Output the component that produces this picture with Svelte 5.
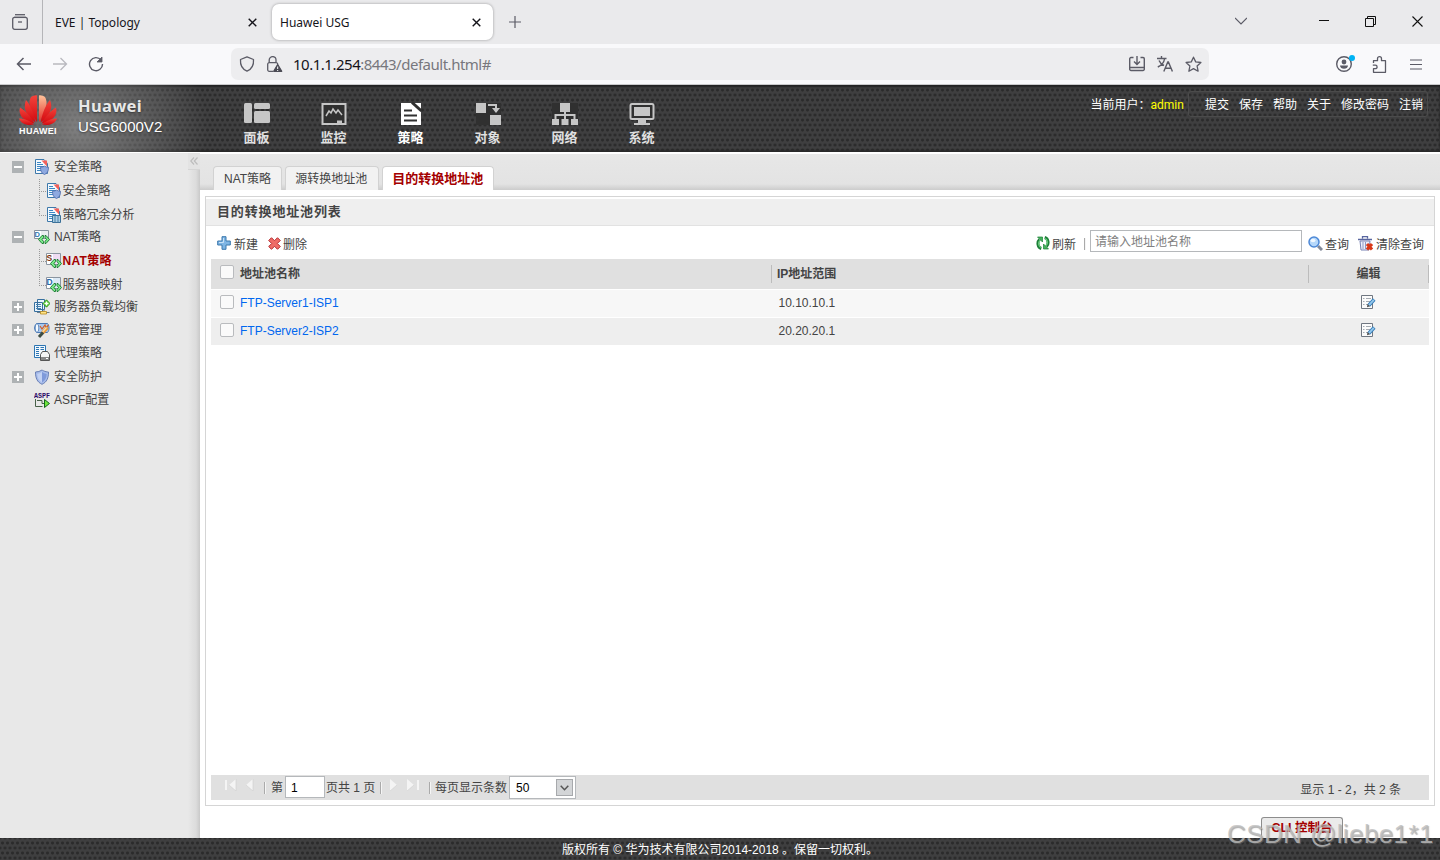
<script lang="ts">
  interface TreeNode {
    label: string;
    icon: string;
    children?: { label: string; icon: string; active?: boolean }[];
    state: 'open' | 'closed' | 'leaf';
  }

  const menu = [
    { label: '面板', icon: 'dashboard' },
    { label: '监控', icon: 'monitor' },
    { label: '策略', icon: 'policy' },
    { label: '对象', icon: 'object' },
    { label: '网络', icon: 'network' },
    { label: '系统', icon: 'system' }
  ];
  const userLinks = ['提交', '保存', '帮助', '关于', '修改密码', '注销'];

  const tree: TreeNode[] = [
    {
      label: '安全策略',
      icon: 'docShield',
      state: 'open',
      children: [
        { label: '安全策略', icon: 'docShield' },
        { label: '策略冗余分析', icon: 'docBin' }
      ]
    },
    {
      label: 'NAT策略',
      icon: 'nat',
      state: 'open',
      children: [
        { label: 'NAT策略', icon: 'natS', active: true },
        { label: '服务器映射', icon: 'natD' }
      ]
    },
    { label: '服务器负载均衡', icon: 'balance', state: 'closed' },
    { label: '带宽管理', icon: 'bandwidth', state: 'closed' },
    { label: '代理策略', icon: 'proxy', state: 'leaf' },
    { label: '安全防护', icon: 'shield', state: 'closed' },
    { label: 'ASPF配置', icon: 'aspf', state: 'leaf' }
  ];

  const tabs = ['NAT策略', '源转换地址池', '目的转换地址池'];
  const pools = [
    { name: 'FTP-Server1-ISP1', range: '10.10.10.1' },
    { name: 'FTP-Server2-ISP2', range: '20.20.20.1' }
  ];

  let activeMenu = $state('策略');
  let activeTab = $state('目的转换地址池');
</script>

{#snippet doc()}
  <path d="M1.500.5h8.500l3.500 4v10h-12z" fill="#f4f9fd" stroke="#3d78aa" />
  <path d="M3 3.500h4M3 5.500h6M3 7.500h7M3 9.500h4M3 11.500h4" stroke="#3c87c4" />
  <path d="M7.500 1.500h5.500v6z" fill="#f4605a" />
{/snippet}

{#snippet arrows()}
  <path d="M8 6.500 4.500 10.500 8 14.500h1.500v-2L8 10.500l1.500-2v-2z" fill="#7bea8b" stroke="#15772c" stroke-width=".9" />
  <path d="M12 6.500 15.500 10.500 12 14.500h-1v-2l1.500-2-1.500-2v-2z" fill="#7bea8b" stroke="#15772c" stroke-width=".9" />
{/snippet}

{#snippet natBase(letter: string, color: string)}
  <path d="M.5.5h14v11H.5z" fill={color} stroke="#8b95a0" />
  <path d="M1 1h6v10H1z" fill="#fff" />
  <text x=".6" y="8" font-size="8.500" font-weight="bold" fill={letter === 'S' ? '#7b3210' : '#2268a8'}>{letter}</text>
  {@render arrows()}
{/snippet}

{#snippet treeIcon(name: string)}
  <svg class="tree-icon" width="16" height="16" viewBox="0 0 16 16" fill="none">
    {#if name === 'docShield'}
      {@render doc()}
      <path d="M6.500 8.200q2 0 4-1 2 1 4 1c0 4-1 6-4 7.300-3-1.300-4-3.300-4-7.300z" fill="#8ea9e0" stroke="#4f68a8" stroke-width=".8" />
    {:else if name === 'docBin'}
      {@render doc()}
      <path d="M6.500 8.500h8v7h-8z" fill="#a9cde4" stroke="#3a6f96" />
      <path d="M9 8.500v7M12 8.500v7" stroke="#4a7fa4" stroke-width="1" />
    {:else if name === 'nat'}
      <path d="M.5 1.500h14v8H.5z" fill="#e9edf0" stroke="#89949e" />
      <path d="M1 2h6v7H1z" fill="#fff" />
      <text x=".6" y="8" font-size="7.500" font-weight="bold" fill="#3077b0">D</text>
      {@render arrows()}
    {:else if name === 'natS'}
      {@render natBase('S', '#efdcf3')}
    {:else if name === 'natD'}
      {@render natBase('D', '#dce9f5')}
    {:else if name === 'balance'}
      <path d="M.5 3.500h8v9h-8zM3.500.5h7v10h-7z" fill="#eaf4fc" stroke="#376f9e" />
      <path d="M2 5.500h5M2 7.500h5M2 9.500h5" stroke="#437fae" />
      <path d="M12.500.8 16 4.500l-3.500 3.700L9 4.500z" fill="#58d52b" stroke="#20810f" stroke-width=".8" />
      <path d="M12.500 2.500v4M10.500 4.500h4" stroke="#fff" stroke-width="1.300" />
      <path d="M10 10v3M3 13.500h12.500" stroke="#6e7f8c" />
      <path d="M6.500 12.500h6v2.500h-6z" fill="#ffe487" stroke="#b98a20" stroke-width=".8" />
    {:else if name === 'bandwidth'}
      <path d="M2.500 1.500h11c2 2 2 7 0 9h-11c-2.500-2-2.500-7 0-9z" fill="#aac8ed" stroke="#4a79b5" />
      <ellipse cx="3" cy="6" rx="1.800" ry="4.300" fill="#f5fbff" stroke="#4a79b5" stroke-width=".8" />
      <path d="m6 4 2 3 3-4 1 3 2.500-3" stroke="#d35d24" stroke-width="1.200" />
      <path d="m13.500 5.500-5 5.500" stroke="#e89a3d" stroke-width="3.400" />
      <path d="m12.500 5.500-4 4.500" stroke="#ffdca0" stroke-width="1.200" />
      <path d="m9 10.500-4 4.500" stroke="#3d4d44" stroke-width="3" />
    {:else if name === 'proxy'}
      <path d="M.5.5h11v12H.5z" fill="#f1f8fe" stroke="#2c75b2" />
      <path d="M2 2.500h3M2 4.500h3M2 6.500h3M2 8.500h3M2 10.500h3M6.500 2.500H10M6.500 4.500H10" stroke="#2c75b2" />
      <path d="M6.500 15.500v-6l2-3h5l2 3v6z" fill="#f5f5f5" stroke="#555" />
      <path d="M7 12h8v3H7z" fill="#888" /><path d="M12 13.500h2" stroke="#fff" />
    {:else if name === 'shield'}
      <path d="M8 1Q5 3 1.500 3C1.500 9 3 13 8 15.300 13 13 14.500 9 14.500 3 11 3 8 1 8 1z" fill="#a8bdeb" stroke="#6a80b5" />
      <path d="M8 3v10.500C4.500 11.500 3.500 8.500 3.300 5 5.500 4.700 8 3 8 3z" fill="#c3d2f3" />
      <path d="M8 3v10.500c3.500-2 4.500-5 4.700-8.500C10.500 4.700 8 3 8 3z" fill="#7f9ada" />
    {:else if name === 'aspf'}
      <text x="0" y="5.500" font-size="7" font-weight="bold" font-family="Liberation Mono, monospace" textLength="16" lengthAdjust="spacingAndGlyphs" fill="#2b0a66">ASPF</text>
      <path d="M1.500 7v7.500h7M3 8.500h5v3h3" stroke="#476049" />
      <path d="m10.500 7.500 5 4-5 4z" fill="#6ee73c" stroke="#14651d" />
    {/if}
  </svg>
{/snippet}

{#snippet closeIcon()}
  <svg width="9" height="9" viewBox="0 0 9 9" stroke="#15141a" stroke-width="1.400"><path d="m.7.7 7.600 7.600M8.300.7.7 8.300" /></svg>
{/snippet}

<div class="window">
  <div class="tabstrip">
    <div class="recent">
      <svg width="16" height="16" viewBox="0 0 16 16" fill="none" stroke="#5b5b66" stroke-width="1.300">
        <path d="M3 .7h10" /><path d="M2 3.400h12" />
        <rect x=".7" y="3.400" width="14.600" height="11.900" rx="2" /><path d="M6 8h4" />
      </svg>
    </div>
    <div class="browser-tab first"><span class="tab-text">EVE | Topology</span>{@render closeIcon()}</div>
    <div class="browser-tab current"><span class="tab-text">Huawei USG</span>{@render closeIcon()}</div>
    <svg class="plus" width="12" height="12" viewBox="0 0 12 12" stroke="#5b5b66" stroke-width="1.200"><path d="M6 0v12M0 6h12" /></svg>
    <div class="window-buttons">
      <svg width="12" height="12" viewBox="0 0 12 12" fill="none" stroke="#5b5b66" stroke-width="1.200"><path d="m0 3 6 6 6-6" /></svg>
      <svg width="10" height="10" viewBox="0 0 10 10" stroke="#111"><path d="M0 4.500h10" /></svg>
      <svg width="11" height="11" viewBox="0 0 11 11" fill="none" stroke="#111"><path d="M.5 2.500h8v8h-8zM2.500 2.500v-2h8v8h-2" /></svg>
      <svg width="11" height="11" viewBox="0 0 11 11" stroke="#111" stroke-width="1.100"><path d="m.5.5 10 10M10.500.5l-10 10" /></svg>
    </div>
  </div>

  <div class="navbar">
    <div class="history">
      <svg width="16" height="16" viewBox="0 0 16 16" fill="none" stroke="#5b5b66" stroke-width="1.500"><path d="M15 8H1.500M7.500 2l-6 6 6 6" /></svg>
      <svg width="16" height="16" viewBox="0 0 16 16" fill="none" stroke="#b9b9bf" stroke-width="1.300"><path d="M1 8h13.500M8.500 2l6 6-6 6" /></svg>
      <svg width="16" height="16" viewBox="0 0 16 16" fill="none" stroke="#5b5b66" stroke-width="1.400"><path d="M13 4A6.500 6.500 0 1 0 14.500 8" /><path d="M14 1v5H9z" fill="#5b5b66" stroke-width=".8" /></svg>
    </div>
    <div class="urlbar">
      <svg width="16" height="16" viewBox="0 0 16 16" fill="none" stroke="#5b5b66" stroke-width="1.300"><path d="M8 .8 14.500 3.500c.4 5-1.500 9.500-6.500 11.700C3 13 1.100 8.500 1.500 3.500z" stroke-linejoin="round" /></svg>
      <svg class="lock" width="17" height="16" viewBox="0 0 17 16" fill="none" stroke="#5b5b66" stroke-width="1.300"><path d="M7 15.300H3.200a1.500 1.500 0 0 1-1.500-1.500V8.200a1.500 1.500 0 0 1 1.500-1.500h7a1.500 1.500 0 0 1 1.500 1.500M3.200 6.500V4a3.400 3.400 0 0 1 6.800 0v2.500" /><path d="m11.700 8.500 4 6.800h-8z" fill="#4b4b55" stroke="#4b4b55" stroke-linejoin="round" /><path d="M11.700 10.500v2.500M11.700 14v1" stroke="#fff" stroke-width="1" /></svg>
      <span class="url"><b>10.1.1.254</b>:8443/default.html#</span>
      <div class="url-actions">
        <svg width="16" height="16" viewBox="0 0 16 16" fill="none" stroke="#5b5b66" stroke-width="1.400"><path d="M4.500 1.500H2a1.300 1.300 0 0 0-1.300 1.300v10.400A1.300 1.300 0 0 0 2 14.500h12a1.300 1.300 0 0 0 1.300-1.300V2.800A1.300 1.300 0 0 0 14 1.500h-2.500M1 11.500h14M8 0v7.500M5 5.500l3 3 3-3" /></svg>
        <svg width="16" height="16" viewBox="0 0 16 16" fill="none" stroke="#5b5b66" stroke-width="1.400"><path d="M0 2.500h9.500M4.500 0v2.500M7.500 3C7 6.500 4 9.500.8 11M2 4.500c1 2.500 3 4 5 5M6.800 15.500l4-9.500h.6l4 9.500M8.300 12.300h5.600" /></svg>
        <svg width="17" height="17" viewBox="0 0 17 17" fill="none" stroke="#5b5b66" stroke-width="1.300" stroke-linejoin="round"><path d="m8.500 1.200 2.200 4.700 5.200.6-3.800 3.500 1 5.200-4.600-2.600-4.600 2.600 1-5.200L1.100 6.500l5.200-.6z" /></svg>
      </div>
    </div>
    <div class="browser-tools">
      <svg width="19" height="18" viewBox="0 0 19 18" fill="none" stroke="#5b5b66" stroke-width="1.400"><circle cx="8" cy="9" r="7.300" /><circle cx="8" cy="7" r="2.400" fill="#5b5b66" stroke="none" /><path d="M4 10.500h8c0 2-1.800 3.300-4 3.300s-4-1.300-4-3.300z" fill="#5b5b66" stroke="none" /><circle cx="16" cy="3" r="3" fill="#00b3f4" stroke="none" /></svg>
      <svg width="15" height="17" viewBox="0 0 15 17" fill="none" stroke="#5b5b66" stroke-width="1.300" stroke-linejoin="round"><path d="M1.500 7V4.700h4V2.700a2 2 0 0 1 4 0v2h4v11.600h-12v-3.600h1.800a1.800 1.800 0 0 0 0-3.600H.8" /></svg>
      <svg width="12" height="11" viewBox="0 0 12 11" stroke="#5b5b66" stroke-width="1.200"><path d="M0 1h12M0 5.500h12M0 10h12" /></svg>
    </div>
  </div>

  <header class="banner">
    <div class="brand">
      <div class="logo">
        <svg width="40" height="30" viewBox="0 0 40 30">
          <defs>
            <linearGradient id="petal" x1="0" y1="0" x2="0" y2="1">
              <stop offset="0" stop-color="#f2443c" /><stop offset="1" stop-color="#d3090f" />
            </linearGradient>
            <linearGradient id="petalLight" x1="0" y1="0" x2="0" y2="1">
              <stop offset="0" stop-color="#ffc29a" /><stop offset="1" stop-color="#e0302a" />
            </linearGradient>
          </defs>
          <path d="M19 27C11 16 10 7 13 2c2-1 4-2 6-1.500z" fill="url(#petal)" />
          <path d="M21 27C29 16 30 7 27 2c-2-1-4-2-6-1.500z" fill="url(#petalLight)" />
          <path d="M17.500 27.500C7 20 5 12 8 5c4 4 8 14 9.500 22.500z" fill="url(#petal)" />
          <path d="M22.500 27.500C33 20 35 12 32 5c-4 4-8 14-9.500 22.500z" fill="url(#petal)" />
          <path d="M16.500 28.500C5 26 0 20 2 12.500c5 3 11 9 14.500 16z" fill="url(#petal)" />
          <path d="M23.500 28.500C35 26 40 20 38 12.500c-5 3-11 9-14.500 16z" fill="url(#petal)" />
          <path d="M16 29.500C9 31 3 29 1 23.500c6 0 11 2.500 15 6z" fill="url(#petal)" />
          <path d="M24 29.500C31 31 37 29 39 23.500c-6 0-11 2.500-15 6z" fill="url(#petal)" />
        </svg>
        <span>HUAWEI</span>
      </div>
      <div class="product"><strong>Huawei</strong><span>USG6000V2</span></div>
    </div>

    <nav class="main-menu">
      {#each menu as item}
        <button class:active={activeMenu === item.label} onclick={() => (activeMenu = item.label)}>
          <svg width="28" height="24" viewBox="0 0 28 24" fill="none" stroke="currentColor">
            {#if item.icon === 'dashboard'}
              <g fill="currentColor" stroke="none"><rect x="1" y="1" width="8" height="20" rx="1.500" /><rect x="11" y="1" width="16" height="6" rx="1.500" /><rect x="11" y="9" width="16" height="12" rx="1.500" /></g>
            {:else if item.icon === 'monitor'}
              <rect x="2.500" y="2" width="23" height="20" fill="#303030" stroke-width="2" />
              <path d="m6 14 3-5 2 2 2-4 3 4 2-3 4 5" stroke-width="1.500" /><path d="M17 20h5" stroke-width="3" />
            {:else if item.icon === 'policy'}
              <path d="M4 1h20v22H4z" fill="currentColor" stroke="none" />
              <path d="m15 .5 9.500 8.500" stroke="#303030" stroke-width="3" />
              <path d="M7 8.500h8M7 13.500h13M7 18.500h13" stroke="#303030" stroke-width="2" />
            {:else if item.icon === 'object'}
              <path d="M2 1h25v22H2z" fill="#303030" stroke="none" />
              <path d="M2 1h10v10H2zM16 13h11v10H16z" fill="currentColor" stroke="none" />
              <path d="M14 3h8v5" stroke-width="2" /><path d="M18 6h8l-4 5z" fill="currentColor" stroke="none" />
            {:else if item.icon === 'network'}
              <path d="M1 1h26v22H1z" fill="#303030" stroke="none" />
              <path d="M9 1h10v9H9zM1 17h7v6H1zM10.500 17h7v6h-7zM20 17h7v6h-7z" fill="currentColor" stroke="none" />
              <path d="M14 10v7M4.500 17v-4h19v4" stroke-width="2" />
            {:else}
              <rect x="2.500" y="2" width="23" height="15" rx="1.500" fill="#303030" stroke-width="2" /><path d="M6 5h16v9H6z" fill="currentColor" stroke="none" />
              <path d="M10 18h8v3h4v2H6v-2h4z" fill="currentColor" stroke="none" />
            {/if}
          </svg>
          <span>{item.label}</span>
        </button>
      {/each}
    </nav>

    <div class="session">
      <span>当前用户：</span><span class="user">admin</span>
      <div class="links">
        {#each userLinks as link}<span>{link}</span>{/each}
      </div>
    </div>
  </header>

  <div class="body">
    <aside class="sidebar">
      <div class="tree">
        {#each tree as node}
          <div class="node" class:leaf={node.state === 'leaf'}>
            <span class="toggle" class:closed={node.state === 'closed'} class:hidden={node.state === 'leaf'}></span>
            {@render treeIcon(node.icon)}
            <span>{node.label}</span>
          </div>
          {#if node.children}
            <div class="children">
              {#each node.children as child}
                <div class="child" class:active={child.active}>
                  {@render treeIcon(child.icon)}
                  <span>{child.label}</span>
                </div>
              {/each}
            </div>
          {/if}
        {/each}
      </div>
      <div class="collapse">
        <svg width="8" height="8" viewBox="0 0 8 8" fill="none" stroke="#bdbdbd" stroke-width="1.200"><path d="M4 .5.8 4 4 7.500M7.500.5 4.300 4l3.200 3.500" /></svg>
      </div>
    </aside>

    <main>
      <div class="page-tabs">
        {#each tabs as tab}
          <button class:active={activeTab === tab} onclick={() => (activeTab = tab)}>{tab}</button>
        {/each}
      </div>

      <section class="panel">
        <h2>目的转换地址池列表</h2>
        <div class="toolbar">
          <span class="tool add">
            <svg width="14" height="14" viewBox="0 0 14 14"><path d="M5 .7h4V5h4.300v4H9v4.300H5V9H.7V5H5z" fill="#7eb5e4" stroke="#3b78ad" /><path d="M6.500 2v4.500H2" stroke="#c8e1f6" fill="none" /></svg>新建
          </span>
          <span class="tool">
            <svg width="13" height="13" viewBox="0 0 13 13"><path d="m3.500.7 3 3 3-3 2.800 2.800-3 3 3 3-2.800 2.800-3-3-3 3L.7 9.500l3-3-3-3z" fill="#ee6b66" stroke="#b52d31" /></svg>删除
          </span>
          <span class="tool refresh">
            <svg width="14" height="14" viewBox="0 0 14 14" fill="none"><path d="M5.300 12.500C1.500 11.500 1 6 3.500 3.500" stroke="#1c7f38" stroke-width="3" /><path d="M8.700 1.500C12.500 2.500 13 8 10.500 10.500" stroke="#1c7f38" stroke-width="3" /><path d="M4.800 11.500C2.300 10 2 6.500 3.800 4.500M9.200 2.500c2.500 1.500 2.800 5 1 7" stroke="#6fd282" stroke-width="1.200" /><path d="M1.500 1h5v5z" fill="#43b35a" stroke="#1c7f38" stroke-width=".7" /><path d="M12.500 13h-5V8z" fill="#43b35a" stroke="#1c7f38" stroke-width=".7" /></svg>刷新
          </span>
          <i class="split"></i>
          <input type="text" placeholder="请输入地址池名称" />
          <span class="tool search">
            <svg width="15" height="15" viewBox="0 0 15 15" fill="none"><path d="m10 10 4 4" stroke="#828999" stroke-width="3" /><circle cx="6" cy="6" r="5" fill="#b5d8fb" stroke="#4d88d6" stroke-width="1.500" /><ellipse cx="5" cy="4.500" rx="2.500" ry="1.700" fill="#f1f8ff" /></svg>查询
          </span>
          <span class="tool clear">
            <svg width="16" height="15" viewBox="0 0 16 15" fill="none"><path d="M4.500 2.500v-2h5v2M0 3.500h14" stroke="#5966a0" stroke-width="1.300" /><path d="M2 5h10l-1 9H3z" fill="#eef0fb" stroke="#7681b4" /><path d="M5 6v7M7.500 6v7" stroke="#8d97c4" /><path d="m9 8 5 5.500M14 8l-5 5.500" stroke="#d93817" stroke-width="3.200" /></svg>清除查询
          </span>
        </div>

        <div class="grid">
          <div class="grid-head">
            <div class="name-cell"><i class="check"></i><span>地址池名称</span></div>
            <div class="range-cell">IP地址范围</div>
            <div class="edit-cell">编辑</div>
          </div>
          {#each pools as pool}
            <div class="grid-row">
              <div class="name-cell"><i class="check"></i><a href="#{pool.name}">{pool.name}</a></div>
              <div class="range-cell">{pool.range}</div>
              <div class="edit-cell">
                <svg width="16" height="15" viewBox="0 0 16 15" fill="none"><path d="M1.500.5h11v13h-11z" fill="#fbfbfb" stroke="#6f7680" /><path d="M3 3.500h1.500M6 3.500h5M3 6.500h1.500M6 6.500h4M3 9.500h1.500M6 9.500h2" stroke="#a5abb2" /><path d="m14.200 4.500-5.500 6" stroke="#347ab6" stroke-width="3.600" /><path d="m13.800 4.800-5 5.500" stroke="#93c8ed" stroke-width="1.800" /><path d="m7.500 9 2.500 2.300-3 .9z" fill="#4c4c4c" /></svg>
              </div>
            </div>
          {/each}
        </div>

        <div class="pager">
          <div class="arrows back">
            <svg width="12" height="12" viewBox="0 0 12 12" fill="#f4f4f4"><path d="M0 1h2v10H0zM11 0v12L4 6z" /><path d="M11 0v12L4 6" fill="none" stroke="#cfcfcf" stroke-width=".6" /></svg>
            <svg width="8" height="12" viewBox="0 0 8 12" fill="#f4f4f4"><path d="M7 0v12L0 6z" /><path d="M7 0v12L0 6" fill="none" stroke="#cfcfcf" stroke-width=".6" /></svg>
          </div>
          <i class="split"></i>
          <span class="page-label">第</span>
          <span class="page-no">1</span>
          <span class="page-total">页共 1 页</span>
          <i class="split"></i>
          <div class="arrows next">
            <svg width="8" height="12" viewBox="0 0 8 12" fill="#f4f4f4"><path d="M0 0v12l7-6z" /><path d="M0 12l7-6" fill="none" stroke="#cfcfcf" stroke-width=".6" /></svg>
            <svg width="12" height="12" viewBox="0 0 12 12" fill="#f4f4f4"><path d="M10 1h2v10h-2zM0 0v12l7-6z" /><path d="M0 12l7-6" fill="none" stroke="#cfcfcf" stroke-width=".6" /></svg>
          </div>
          <i class="split"></i>
          <span class="size-label">每页显示条数</span>
          <span class="page-size">50
            <span class="drop"><svg width="9" height="6" viewBox="0 0 9 6" fill="none" stroke="#555" stroke-width="1.500"><path d="m.7.7 3.800 4L8.300.7" /></svg></span>
          </span>
          <span class="summary">显示 1 - 2，共 2 条</span>
        </div>
      </section>

      <button class="cli">CLI 控制台</button>
    </main>
  </div>

  <footer>版权所有 © 华为技术有限公司2014-2018 。保留一切权利。</footer>
  <div class="watermark">CSDN @liebe1*1</div>
</div>

<style>
  :global(body) {
    margin: 0;
    overflow: hidden;
  }

  .window {
    position: relative;
    display: flex;
    flex-direction: column;
    height: 860px;
    background: #fff;
    color: #444;
    font: 12px/16px 'Liberation Sans', 'Noto Sans CJK SC', sans-serif;
  }

  .window :global(svg) {
    display: block;
    flex: none;
  }

  button {
    padding: 0;
    border: 0;
    background: none;
    color: inherit;
    font: inherit;
  }

  /* Browser chrome */
  .tabstrip {
    display: flex;
    align-items: center;
    height: 44px;
    background: #eaeaec;
    color: #15141a;
    font: 12px/16px 'Noto Sans', 'Open Sans', sans-serif;
  }

  .recent {
    display: flex;
    align-items: center;
    width: 30px;
    height: 44px;
    padding-left: 12px;
    border-right: 1px solid #b5b5b8;
  }

  .browser-tab {
    display: flex;
    align-items: center;
    justify-content: space-between;
    box-sizing: border-box;
    height: 36px;
  }

  .tab-text {
    padding-top: 2px;
  }

  .browser-tab.first {
    width: 226px;
    padding: 0 12px;
  }

  .browser-tab.current {
    width: 221px;
    margin-left: 3px;
    padding: 0 12px 0 8px;
    border-radius: 7px;
    background: #fff;
    box-shadow: 0 0 3px rgba(0, 0, 0, 0.35);
  }

  .plus {
    margin-left: 16px;
  }

  .window-buttons {
    display: flex;
    align-items: center;
    margin-left: auto;
    padding: 0 17px 2px 0;
    gap: 36px;
  }

  .window-buttons svg:first-child {
    margin-right: 36px;
  }

  .navbar {
    display: flex;
    align-items: center;
    box-sizing: border-box;
    height: 41px;
    padding: 0 18px 0 16px;
    border-bottom: 1px solid #c9c9cb;
    background: #f9f9fb;
  }

  .history {
    display: flex;
    gap: 20px;
    width: 215px;
  }

  .urlbar {
    display: flex;
    align-items: center;
    box-sizing: border-box;
    width: 978px;
    height: 32px;
    padding: 0 7px 0 8px;
    border-radius: 7px;
    background: #ededef;
  }

  .lock {
    margin-left: 11px;
  }

  .url {
    margin: -1px 0 0 10px;
    color: #77777d;
    font: 15px/20px 'Noto Sans', 'Open Sans', sans-serif;
    letter-spacing: -0.49px;
  }

  .url b {
    color: #15141a;
    font-weight: 400;
  }

  .url-actions {
    display: flex;
    gap: 12px;
    margin-left: auto;
  }

  .browser-tools {
    display: flex;
    align-items: center;
    gap: 17px;
    margin-left: auto;
  }

  .browser-tools svg:nth-child(2) {
    margin-right: 6px;
  }

  /* Banner */
  .banner,
  footer {
    background-color: #3f3f40;
    background-image: radial-gradient(circle, #2b2b2b 1px, transparent 2px), radial-gradient(circle, #2b2b2b 1px, transparent 2px);
    background-position: 0 0, 2.5px 5px;
    background-size: 5px 10px;
  }

  .banner {
    position: relative;
    display: flex;
    height: 67px;
    box-shadow: inset 0 2px 2px #222, inset 0 -2px 2px #292929;
    color: #fff;
  }

  .brand {
    display: flex;
    width: 218px;
    background: radial-gradient(ellipse 130px 110px at 78px 42px, rgba(170, 170, 170, 0.6), transparent);
  }

  .logo {
    display: flex;
    flex-direction: column;
    align-items: center;
    width: 40px;
    margin: 10px 20px 0 18px;
  }

  .logo span {
    font: bold 9px/12px 'Liberation Sans', sans-serif;
    letter-spacing: 0.3px;
  }

  .product {
    display: flex;
    flex-direction: column;
    padding-top: 10px;
    text-shadow: 0 1px 2px #333;
  }

  .product strong {
    color: #e8e8e8;
    font: bold 16.500px/22px 'Noto Sans', sans-serif;
    letter-spacing: 0.3px;
  }

  .product span {
    font-size: 15px;
    line-height: 20px;
  }

  .main-menu {
    display: flex;
  }

  .main-menu button {
    display: flex;
    flex-direction: column;
    align-items: center;
    width: 77px;
    padding-top: 17px;
    color: #c6c6c6;
  }

  .main-menu span {
    margin-top: 2px;
    color: #e0e0e0;
    font: bold 13px/18px 'Noto Sans CJK SC', sans-serif;
  }

  .main-menu .active,
  .main-menu .active span {
    color: #fff;
  }

  .session {
    display: flex;
    align-items: center;
    height: 26px;
    margin: 6px 12px 0 auto;
    padding-top: 1px;
    white-space: nowrap;
  }

  .user {
    color: #ff0;
    font-family: Roboto, sans-serif;
  }

  .links {
    display: flex;
    box-sizing: border-box;
    gap: 10px;
    height: 26px;
    margin: -2px 0 0 4px;
    padding: 5px 4px 0 16px;
    border: 1px solid #4b4b4b;
    border-radius: 3px;
  }

  /* Sidebar */
  .body {
    display: flex;
    height: 686px;
  }

  .sidebar {
    display: flex;
    justify-content: space-between;
    box-sizing: border-box;
    width: 200px;
    padding-top: 2px;
    border-top: 1px solid #fff;
    background: linear-gradient(90deg, #e8e8e8 188px, #e0e0e0 193px, #dcdcdc 196px, #c9c9c9 200px);
  }

  .node {
    display: flex;
    align-items: center;
    height: 23px;
    padding-left: 12px;
  }

  .node.leaf {
    height: 24px;
  }

  .node .tree-icon {
    margin: 0 4px 0 10px;
  }

  .toggle {
    width: 12px;
    height: 12px;
    background: linear-gradient(#fff, #fff) center / 8px 2px no-repeat #aeb2b4;
  }

  .toggle.closed {
    background: linear-gradient(#fff, #fff) center / 8px 2px no-repeat, linear-gradient(#fff, #fff) center / 2px 8px no-repeat #aeb2b4;
  }

  .toggle.hidden {
    visibility: hidden;
  }

  .children {
    margin: 1px 0 -2px 39px;
    background: repeating-linear-gradient(#999 0 1px, transparent 1px 2px) 0 0 / 1px 38px no-repeat;
  }

  .child {
    display: flex;
    align-items: center;
    height: 24px;
    padding-left: 7px;
    background: repeating-linear-gradient(90deg, #999 0 1px, transparent 1px 2px) 0 12px / 7px 1px no-repeat;
  }

  .child span {
    padding-left: 0.5px;
  }

  .child.active {
    color: #a40000;
    font-weight: bold;
    letter-spacing: 0.3px;
  }

  .collapse {
    display: flex;
    align-items: center;
    justify-content: center;
    width: 12px;
    height: 16px;
    margin-top: -2px;
    border-bottom: 1px solid #d5d5d5;
    background: #e3e3e3;
  }

  /* Content */
  main {
    display: flex;
    flex: 1;
    flex-direction: column;
  }

  .page-tabs {
    display: flex;
    align-items: flex-end;
    box-sizing: border-box;
    gap: 3px;
    height: 38px;
    padding-left: 13px;
    border-top: 2px solid #fff;
    background: linear-gradient(#e7e7e7, #e3e3e3 30px, #ccc);
  }

  .page-tabs button {
    box-sizing: border-box;
    height: 24px;
    padding: 1px 10px 0 9px;
    border: 1px solid #d2d2d2;
    border-bottom: 0;
    border-radius: 4px 4px 0 0;
    background: #f2f2f2;
  }

  .page-tabs button:first-child {
    padding: 1px 10px 0;
  }

  .page-tabs button:nth-child(2) {
    padding-right: 11px;
  }

  .page-tabs .active {
    background: #fff;
    color: #a40000;
    font-size: 13px;
    font-weight: bold;
  }

  .panel {
    display: flex;
    flex-direction: column;
    box-sizing: border-box;
    height: 610px;
    margin: 6px 5px 0;
    padding: 2px 0 5px;
    border: 1px solid #d5d5d5;
  }

  h2 {
    box-sizing: border-box;
    height: 27px;
    margin: 0;
    padding: 5px 11px;
    border-bottom: 1px solid #e2e2e2;
    background: #efefef;
    font-size: 13px;
    line-height: 16px;
    letter-spacing: 0.85px;
  }

  .toolbar {
    display: flex;
    height: 33px;
    padding: 0 10px 0 11px;
  }

  .tool {
    display: flex;
    align-items: center;
    gap: 2px;
    margin-top: 5px;
    margin-right: 11px;
    height: 27px;
  }

  .tool svg {
    margin-bottom: 3px;
  }

  .tool.add {
    gap: 3px;
    margin-right: 10px;
  }

  .tool.refresh {
    margin-left: auto;
    margin-right: 8px;
  }

  .tool.search {
    margin-right: 9px;
  }

  .tool.clear {
    gap: 2px;
    margin-right: 0;
  }

  .split {
    width: 1px;
    height: 12px;
    background: #aaa;
    box-shadow: 1px 0 #f5f5f5;
  }

  .toolbar .split {
    margin-top: 12px;
  }

  .toolbar input {
    box-sizing: border-box;
    width: 212px;
    height: 22px;
    margin: 4px 6px 0 5px;
    padding: 1px 5px 0 4px;
    border: 1px solid #b5b8bb;
    border-radius: 0;
    font: inherit;
  }

  input::placeholder {
    color: #808080;
  }

  .grid {
    margin: 0 5px;
  }

  .grid-head,
  .grid-row {
    display: flex;
    align-items: center;
    height: 27px;
    margin-bottom: 1px;
    background: #f7f7f7;
  }

  .grid-row > div {
    margin-top: -2px;
  }

  .grid-row:last-child {
    background: #eee;
  }

  .grid-head {
    height: 30px;
    background: #e0e0e0;
    font-weight: bold;
  }

  .name-cell {
    display: flex;
    align-items: center;
    box-sizing: border-box;
    gap: 6px;
    width: 560px;
    padding-left: 9px;
  }

  .check {
    box-sizing: border-box;
    width: 14px;
    height: 14px;
    margin-bottom: 2px;
    border: 1px solid #b9bbbe;
    border-radius: 2px;
    background: #fafafa;
  }

  .grid-head .check {
    margin-bottom: 4px;
  }

  a {
    color: #0067ef;
    text-decoration: none;
  }

  .range-cell {
    box-sizing: border-box;
    width: 537px;
    padding-left: 7.5px;
  }

  .grid-head .range-cell {
    padding-left: 5px;
    border-left: 1px solid #bcbcbc;
  }

  .edit-cell {
    display: flex;
    justify-content: center;
    width: 119px;
  }

  .grid-head .edit-cell {
    border: solid #bcbcbc;
    border-width: 0 1px;
  }

  .grid-head .range-cell,
  .grid-head .edit-cell {
    line-height: 18px;
  }

  .pager {
    display: flex;
    align-items: center;
    height: 25px;
    margin: auto 5px 0;
    background: #e0e0e0;
  }

  .arrows {
    display: flex;
    gap: 10px;
    margin-bottom: 5px;
  }

  .back {
    margin: 0 10px 5px 14px;
    gap: 9px;
  }

  .next {
    margin-left: 9px;
    margin-right: 10px;
    gap: 9px;
  }

  .page-label {
    margin-left: 6px;
  }

  .page-no,
  .page-size {
    box-sizing: border-box;
    height: 22px;
    border: 1px solid #b5b8bb;
    background: #fff;
    color: #000;
  }

  .page-no {
    width: 40px;
    margin-left: 2px;
    margin-bottom: 1px;
    padding: 3px 5px;
  }

  .page-total {
    width: 54px;
    margin-left: 1px;
    white-space: nowrap;
  }

  .size-label {
    margin-left: 5px;
  }

  .page-size {
    display: flex;
    align-items: center;
    justify-content: space-between;
    width: 67px;
    height: 23px;
    margin-left: 2px;
    padding: 0 2px 0 6px;
  }

  .drop {
    display: flex;
    align-items: center;
    justify-content: center;
    box-sizing: border-box;
    width: 17px;
    height: 17px;
    border: 1px solid #a7a9ac;
    background: #d3d5d7;
  }

  .summary {
    margin: 4px 28px 0 auto;
  }

  .cli {
    box-sizing: border-box;
    width: 82px;
    height: 21px;
    margin: 11px 97px 0 auto;
    border: 1px solid #8d8d8d;
    border-bottom: 0;
    border-radius: 3px 3px 0 0;
    background: #ebebeb;
    color: #a40000;
    font-size: 12.5px;
    font-weight: bold;
  }

  footer {
    height: 22px;
    color: #fff;
    line-height: 25px;
    text-align: center;
  }

  .watermark {
    position: absolute;
    top: 818px;
    left: 1227px;
    color: rgba(190, 190, 190, 0.8);
    font-size: 26px;
    line-height: 32px;
    letter-spacing: 0.4px;
    text-shadow: 1px 1px 1px rgba(120, 120, 120, 0.6);
    white-space: nowrap;
  }
</style>
